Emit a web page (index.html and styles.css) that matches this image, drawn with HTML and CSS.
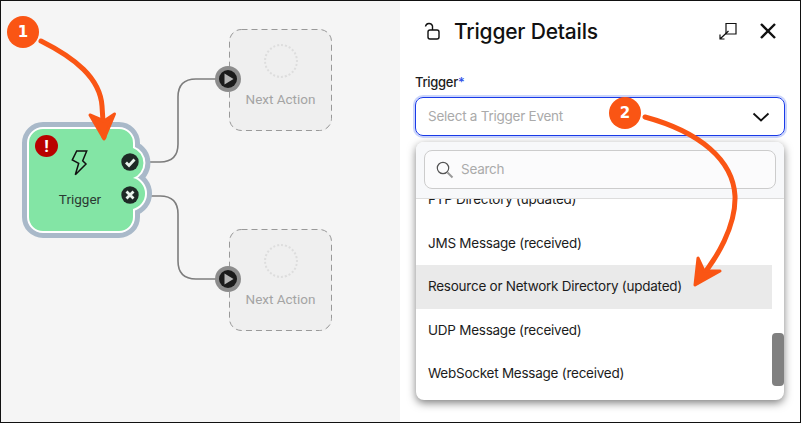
FILE: index.html
```html
<!DOCTYPE html>
<html lang="en">
<head>
  <meta charset="UTF-8">
  <title>Trigger Details</title>
  <link rel="stylesheet" href="styles.css">
</head>
<body>
  <div class="frame">
    <div class="canvas">
      <svg class="wires" width="399" height="421" viewBox="1 1 399 421">
        <path class="wire" d="M147 162H160Q178 162 178 144V97Q178 79 196 79H228"/>
        <path class="wire" d="M147 196H160Q178 196 178 214V261Q178 279 196 279H228"/>
        <path class="node-edge" d="M43 129H119A14 14 0 0 1 133 143V148A16 16 0 0 1 133 178A16 16 0 0 1 133 209V217A14 14 0 0 1 119 231H43A14 14 0 0 1 29 217V143A14 14 0 0 1 43 129Z"/>
        <path class="node-gap" d="M43 129H119A14 14 0 0 1 133 143V148A16 16 0 0 1 133 178A16 16 0 0 1 133 209V217A14 14 0 0 1 119 231H43A14 14 0 0 1 29 217V143A14 14 0 0 1 43 129Z"/>
        <path class="node-fill" d="M43 129H119A14 14 0 0 1 133 143V148A16 16 0 0 1 133 178A16 16 0 0 1 133 209V217A14 14 0 0 1 119 231H43A14 14 0 0 1 29 217V143A14 14 0 0 1 43 129Z"/>
        <path class="bolt" d="M76.7 151H86.7L82.7 160.7L86 164L75.3 174.7L78.7 163.3L72.3 160Z"/>
        <circle class="badge-dark" cx="130" cy="162" r="8.7"/>
        <path class="glyph-line" d="M126 162.500L129 165.500L134.500 159.500"/>
        <circle class="badge-dark" cx="130" cy="195" r="8.7"/>
        <path class="glyph-line" d="M126.500 191.500L133.500 198.500M133.500 191.500L126.500 198.500"/>
      </svg>

      <div class="error-badge">!</div>
      <div class="node-label">Trigger</div>

      <div class="action-box action-top">
        <svg class="action-dash" width="103" height="102" viewBox="0 0 103 102">
          <rect x="0.500" y="0.500" width="102" height="101" rx="12"/>
        </svg>
        <div class="action-ring"></div>
        <div class="action-label">Next Action</div>
      </div>
      <div class="action-box action-bottom">
        <svg class="action-dash" width="103" height="102" viewBox="0 0 103 102">
          <rect x="0.500" y="0.500" width="102" height="101" rx="12"/>
        </svg>
        <div class="action-ring"></div>
        <div class="action-label">Next Action</div>
      </div>

      <svg class="port port-top" width="26" height="26" viewBox="0 0 26 26">
        <circle cx="13" cy="13" r="13" fill="#8c8c8c"/>
        <circle cx="13" cy="13" r="9" fill="#1b1b1b"/>
        <path d="M9.500 7.500L18.500 13L9.500 18.500Z" fill="#b5b5b5"/>
      </svg>
      <svg class="port port-bottom" width="26" height="26" viewBox="0 0 26 26">
        <circle cx="13" cy="13" r="13" fill="#8c8c8c"/>
        <circle cx="13" cy="13" r="9" fill="#1b1b1b"/>
        <path d="M9.500 7.500L18.500 13L9.500 18.500Z" fill="#b5b5b5"/>
      </svg>
    </div>

    <div class="panel">
      <div class="panel-header">
        <svg class="lock-icon" width="16" height="18" viewBox="0 0 16 18">
          <path d="M1.500 4.500A3.600 3.600 0 0 1 8.500 4V8"/>
          <rect x="4" y="8" width="11" height="9" rx="2"/>
        </svg>
        <h1 class="panel-title">Trigger Details</h1>
        <svg class="expand-icon" width="18" height="18" viewBox="0 0 18 18">
          <path d="M7 1.500H17V12H7Z"/>
          <path d="M1 17L9.500 9M1 12.500V17H5.500"/>
        </svg>
        <svg class="close-icon" width="18" height="18" viewBox="0 0 18 18">
          <path d="M2 2L16 16M16 2L2 16"/>
        </svg>
      </div>

      <label class="field-label">Trigger<span class="required">*</span></label>
      <div class="select-box">
        <span class="placeholder">Select a Trigger Event</span>
        <svg class="chevron" width="18" height="10" viewBox="0 0 18 10">
          <path d="M1.500 1.500L9 8.500L16.500 1.500"/>
        </svg>
      </div>

      <div class="dropdown">
        <div class="search-wrap">
          <div class="search-box">
            <svg class="search-icon" width="18" height="18" viewBox="0 0 18 18">
              <circle cx="7" cy="7" r="5.700"/>
              <path class="search-handle" d="M11.500 11.500L16.500 16.500"/>
            </svg>
            <span class="placeholder">Search</span>
          </div>
        </div>
        <div class="list-wrap">
          <ul class="option-list">
            <li class="option">FTP Directory (updated)</li>
            <li class="option">JMS Message (received)</li>
            <li class="option option-active">Resource or Network Directory (updated)</li>
            <li class="option">UDP Message (received)</li>
            <li class="option">WebSocket Message (received)</li>
          </ul>
          <div class="scroll-thumb"></div>
        </div>
      </div>
    </div>

    <svg class="callouts" width="799" height="421" viewBox="1 1 799 421">
      <path class="callout-line" d="M41 41C75 58 100 78 102 106L104 137"/>
      <path class="callout-head" d="M90 115L104 139L114.500 114L104 121Z"/>
      <path class="callout-line" d="M645 117C700 132 733 160 735 196C736 225 718 258 697 282"/>
      <path class="callout-head" d="M698 258L695 285L720 271L704 271Z"/>
    </svg>
    <div class="step step-one">1</div>
    <div class="step step-two">2</div>
  </div>
</body>
</html>
```

FILE: styles.css
```css
* {
  box-sizing: border-box;
}
body {
  margin: 0;
  font-family: 'Inter', sans-serif;
  color: #1c1c1c;
}
.frame {
  position: relative;
  display: flex;
  width: 801px;
  height: 423px;
  border: 1px solid #111;
  overflow: hidden;
  background-color: #fff;
}

/* flow canvas */
.canvas {
  position: relative;
  flex: 0 0 399px;
  background-color: #f5f5f5;
  font-family: 'Roboto', sans-serif;
}
.wires {
  position: absolute;
  left: 0;
  top: 0;
}
.wire {
  fill: none;
  stroke: #7d7d7d;
  stroke-width: 1.6;
}
.node-edge {
  fill: #a9b9c9;
  stroke: #a9b9c9;
  stroke-width: 14;
  stroke-linejoin: round;
}
.node-gap {
  fill: #fff;
  stroke: #fff;
  stroke-width: 4;
  stroke-linejoin: round;
}
.node-fill {
  fill: #83e5a5;
}
.bolt {
  fill: none;
  stroke: #111;
  stroke-width: 1.5;
  stroke-linejoin: miter;
}
.badge-dark {
  fill: #1e2a26;
}
.glyph-line {
  fill: none;
  stroke: #e8f3ec;
  stroke-width: 2.8;
}
.error-badge {
  position: absolute;
  left: 34px;
  top: 134px;
  width: 23px;
  height: 22px;
  border-radius: 50%;
  background-color: #b90000;
  color: #fff;
  font-size: 17px;
  font-weight: 700;
  line-height: 22px;
  text-align: center;
}
.node-label {
  position: absolute;
  left: 29px;
  top: 190px;
  width: 100px;
  font-size: 13.5px;
  line-height: 17px;
  text-align: center;
  color: #2b3a33;
}
.action-box {
  position: absolute;
  left: 228px;
  width: 103px;
  height: 102px;
  padding-top: 15px;
  display: flex;
  flex-direction: column;
  align-items: center;
  border-radius: 12px;
  background-color: #efefef;
}
.action-top {
  top: 28px;
}
.action-bottom {
  top: 228px;
}
.action-dash {
  position: absolute;
  left: 0;
  top: 0;
  fill: none;
  stroke: #999;
  stroke-width: 1;
  stroke-dasharray: 6 4;
}
.action-ring {
  width: 34px;
  height: 34px;
  border: 2px dotted #ddd;
  border-radius: 50%;
}
.action-label {
  margin-top: 13px;
  font-size: 13.5px;
  font-weight: 400;
  line-height: 16px;
  color: #a4a4a4;
}
.port {
  position: absolute;
  left: 214px;
}
.port-top {
  top: 65px;
}
.port-bottom {
  top: 265px;
}

/* details panel */
.panel {
  flex: 1;
  padding: 15px 15px 0 15px;
}
.panel-header {
  display: flex;
  align-items: center;
  height: 30px;
  padding-left: 9px;
}
.lock-icon {
  margin-right: 14px;
  fill: none;
  stroke: #111;
  stroke-width: 1.4;
}
.panel-title {
  flex: 1;
  margin: 0;
  font-size: 21px;
  font-weight: 500;
  letter-spacing: -0.2px;
  color: #111;
}
.expand-icon {
  margin-right: 22px;
  fill: none;
  stroke: #111;
  stroke-width: 1.2;
}
.close-icon {
  margin-right: 8px;
  fill: none;
  stroke: #111;
  stroke-width: 2.4;
}
.field-label {
  display: block;
  margin-top: 28px;
  font-size: 13px;
  font-weight: 500;
  letter-spacing: -0.3px;
  line-height: 16px;
}
.required {
  color: #2f50e8;
}
.select-box {
  display: flex;
  align-items: center;
  justify-content: space-between;
  width: 370px;
  height: 39px;
  margin-top: 7px;
  padding: 0 14px 0 12px;
  border: 1.5px solid #1a3be8;
  border-radius: 8px;
  box-shadow: 0 0 0 2px #cbd5fb;
}
.placeholder {
  margin-top: -2px;
  font-size: 13.5px;
  letter-spacing: -0.25px;
  color: #aaa;
}
.chevron {
  fill: none;
  stroke: #111;
  stroke-width: 1.8;
}
.dropdown {
  width: 368px;
  height: 258px;
  margin: 6px 0 0 1px;
  border-radius: 8px;
  overflow: hidden;
  background-color: #fff;
  box-shadow: 0 3px 8px rgba(0, 0, 0, 0.5);
}
.search-wrap {
  height: 57px;
  padding: 8px;
  background-color: #f7f8fa;
  border-bottom: 1px solid #ddd;
}
.search-box {
  display: flex;
  align-items: center;
  gap: 7px;
  height: 39px;
  padding-left: 11px;
  border: 1px solid #ccc;
  border-radius: 8px;
  background-color: #fbfbfc;
}
.search-icon {
  fill: none;
  stroke: #555;
  stroke-width: 1.2;
}
.search-handle {
  stroke-width: 2;
  stroke: #999;
}
.list-wrap {
  position: relative;
  height: 201px;
  overflow: hidden;
}
.option-list {
  margin: -21px 0 0 0;
  padding: 0;
  list-style: none;
}
.option {
  height: 43.5px;
  margin-right: 12px;
  padding-left: 12px;
  font-size: 13.5px;
  letter-spacing: -0.25px;
  line-height: 43.5px;
  color: #1c1c1c;
}
.option-active {
  background-color: #eaeaea;
}
.scroll-thumb {
  position: absolute;
  right: 0;
  top: 134px;
  width: 12px;
  height: 53px;
  border-radius: 4px;
  background-color: #808080;
}

/* annotation layer */
.callouts {
  position: absolute;
  left: 0;
  top: 0;
}
.callout-line {
  fill: none;
  stroke: #fa5514;
  stroke-width: 5;
  stroke-linecap: round;
}
.callout-head {
  fill: #fa5514;
  stroke: #fa5514;
  stroke-width: 3;
  stroke-linejoin: round;
}
.step {
  position: absolute;
  width: 32px;
  height: 32px;
  border-radius: 50%;
  background-color: #fa5514;
  color: #fff;
  font-family: 'DejaVu Sans', sans-serif;
  font-size: 15px;
  font-weight: 700;
  line-height: 32px;
  text-align: center;
}
.step-one {
  left: 6px;
  top: 15px;
}
.step-two {
  left: 608px;
  top: 96px;
}
```
